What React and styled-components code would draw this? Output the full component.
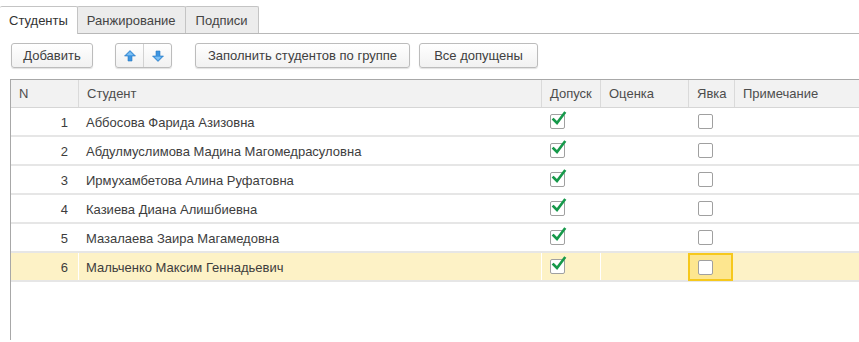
import React from 'react'
import styled, { createGlobalStyle } from 'styled-components'

const GlobalStyle = createGlobalStyle`
    body {
        margin: 0;
        background: #fff;
        font-family: "Liberation Sans", Arial, sans-serif;
        font-size: 13px;
        color: #4a4a4a;
    }
`

///Styled Components

const Page = styled.div`
    width: 859px;
    height: 342px;
    overflow: hidden;
    padding-top: 6px;
    box-sizing: border-box;
`

const TabBar = styled.div`
    display: flex;
    height: 27px;
    border-bottom: 1px solid #b8b8b8;
`

const Tab = styled.div`
    display: flex;
    align-items: center;
    padding: 0 ${p => p.$pad}px;
    box-sizing: border-box;
    border: 1px solid #c4c4c4;
    border-left: ${p => p.$first ? 'none' : '1px solid #c4c4c4'};
    border-bottom: none;
    margin-left: ${p => p.$first ? 0 : -1}px;
    border-radius: 2px 2px 0 0;
    background: ${p => p.$active ? '#fff' : '#ececec'};
    height: ${p => p.$active ? 28 : 27}px;
    margin-bottom: ${p => p.$active ? -1 : 0}px;
    color: ${p => p.$active ? '#333' : '#444'};
    position: relative;
    z-index: ${p => p.$active ? 1 : 0};
`

const Toolbar = styled.div`
    display: flex;
    align-items: center;
    padding: 9px 0 0 11px;
    height: 25px;
`

const Button = styled.div`
    display: flex;
    align-items: center;
    justify-content: center;
    height: 25px;
    width: ${p => p.$w}px;
    margin-right: ${p => p.$mr}px;
    box-sizing: border-box;
    border: 1px solid #bcbcbc;
    border-radius: 3px;
    background: linear-gradient(#ffffff, #f1f1f1);
    box-shadow: 0 1px 1px rgba(0, 0, 0, 0.12);
    color: #404040;
`

const ButtonGroup = styled.div`
    display: flex;
    height: 25px;
    margin-right: 23px;
    box-sizing: border-box;
    border: 1px solid #bcbcbc;
    border-radius: 3px;
    background: linear-gradient(#ffffff, #f1f1f1);
    box-shadow: 0 1px 1px rgba(0, 0, 0, 0.12);
`

const GroupPart = styled.div`
    display: flex;
    align-items: center;
    justify-content: center;
    width: 27px;
    border-left: ${p => p.$sep ? '1px solid #d2d2d2' : 'none'};
`

const Grid = styled.div`
    margin: 11px 0 0 10px;
    border-left: 1px solid #a8a8a8;
    border-top: 1px solid #a8a8a8;
    height: 260px;
`

const GridRow = styled.div`
    display: grid;
    grid-template-columns: 67px 463px 59px 88px 46px 1fr;
    height: ${p => p.$head ? 28 : 29}px;
    box-sizing: border-box;
    border-bottom: ${p => p.$head ? '1px solid #d6d6d6' : '2px solid #e6e6e6'};
    background: ${p => p.$head ? '#f2f2f2' : p.$selected ? '#fdf2c6' : '#fff'};
`

const HeadCell = styled.div`
    display: flex;
    align-items: center;
    padding-left: 8px;
    border-left: ${p => p.$first ? 'none' : '1px solid #dadada'};
    color: #4d4d4d;
`

const Cell = styled.div`
    display: flex;
    align-items: center;
    justify-content: ${p => p.$align || 'flex-start'};
    padding: ${p => p.$pad || '1px 7px 0'};
    box-sizing: border-box;
    border-left: 1px solid ${p => p.$sep ? '#fff' : 'transparent'};
    color: #3d3d3d;
`

const FocusCell = styled(Cell)`
    border: 2px solid #f6c81c;
    background: #fde68f;
    margin: 0 1px -1px 0;
`

const Box = styled.div`
    position: relative;
    width: 13px;
    height: 13px;
    border: 1px solid #a0a0a0;
    border-radius: 2px;
    background: #fff;
`

const Mark = styled.svg`
    position: absolute;
    left: 0;
    top: -5px;
`
///End of Styled Components

const students = [
    'Аббосова Фарида Азизовна',
    'Абдулмуслимова Мадина Магомедрасуловна',
    'Ирмухамбетова Алина Руфатовна',
    'Казиева Диана Алишбиевна',
    'Мазалаева Заира Магамедовна',
    'Мальченко Максим Геннадьевич',
]

const Arrow = ({ down }) => (
    <svg width="12" height="12" viewBox="0 0 12 12" style={{ transform: down ? 'rotate(180deg)' : 'none' }}>
        <path d="M6 0.5 L11.5 6 L8 6 L8 11 L4 11 L4 6 L0.5 6 Z" fill="#3d95e0" stroke="#2a7bc4" strokeWidth="0.6" />
        <path d="M6 1.8 L9.5 5.2 L2.5 5.2 Z" fill="#7cc0f5" />
    </svg>
)

const Check = ({ checked }) => (
    <Box>
        {checked && (
            <Mark width="16" height="16" viewBox="0 0 16 16">
                <path d="M2.5 9.5 L6 13 L13.5 3" fill="none" stroke="#16994a" strokeWidth="2.6" strokeLinecap="square" />
            </Mark>
        )}
    </Box>
)

export default function App() {
    return (
        <Page>
            <GlobalStyle />
            <TabBar>
                <Tab $active $first $pad={9}>Студенты</Tab>
                <Tab $pad={9}>Ранжирование</Tab>
                <Tab $pad={10}>Подписи</Tab>
            </TabBar>
            <Toolbar>
                <Button $w={82} $mr={22}>Добавить</Button>
                <ButtonGroup>
                    <GroupPart><Arrow /></GroupPart>
                    <GroupPart $sep><Arrow down /></GroupPart>
                </ButtonGroup>
                <Button $w={215} $mr={9}>Заполнить студентов по группе</Button>
                <Button $w={119} $mr={0}>Все допущены</Button>
            </Toolbar>
            <Grid>
                <GridRow $head>
                    <HeadCell $first>N</HeadCell>
                    <HeadCell>Студент</HeadCell>
                    <HeadCell>Допуск</HeadCell>
                    <HeadCell>Оценка</HeadCell>
                    <HeadCell>Явка</HeadCell>
                    <HeadCell>Примечание</HeadCell>
                </GridRow>
                {students.map((name, i) => {
                    const selected = i === students.length - 1
                    return (
                        <GridRow key={name} $selected={selected}>
                            <Cell $align="flex-end" $pad="1px 10px 0 0">{i + 1}</Cell>
                            <Cell $sep={selected}>{name}</Cell>
                            <Cell $sep={selected} $pad="0 0 0 8px"><Check checked /></Cell>
                            <Cell $sep={selected} />
                            {selected
                                ? <FocusCell $pad="0 0 0 8px"><Check /></FocusCell>
                                : <Cell $pad="0 0 0 9px"><Check /></Cell>}
                            <Cell />
                        </GridRow>
                    )
                })}
            </Grid>
        </Page>
    )
}
